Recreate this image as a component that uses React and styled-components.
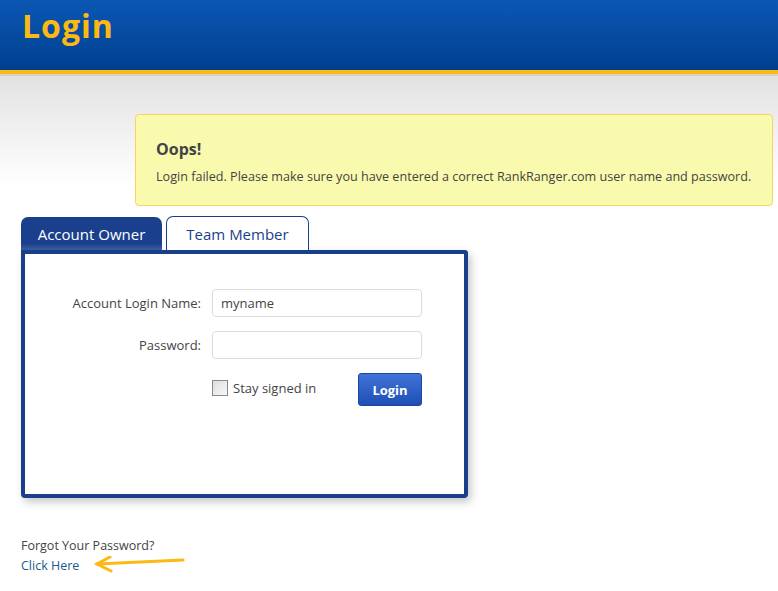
import React from 'react';
import styled, { createGlobalStyle } from 'styled-components';

const GlobalStyle = createGlobalStyle`
  body {
    margin: 0;
    background: #fff;
    font-family: "Open Sans", "Noto Sans", sans-serif;
    color: #3a3a3a;
  }
`;

const Header = styled.div`
  height: 70px;
  background: linear-gradient(#0b57b4, #003f8f);
  border-bottom: 4px solid #fdb913;
  padding-left: 22px;
  box-sizing: content-box;
`;

const Title = styled.h1`
  margin: 0;
  padding-top: 4px;
  font-family: "Open Sans", sans-serif;
  font-weight: 700;
  font-size: 32px;
  letter-spacing: 1px;
  color: #fdb913;
`;

const Main = styled.div`
  border-top: 2px solid #d2d2d2;
  background: linear-gradient(#e2e2e2, #ffffff 110px) no-repeat;
  background-size: 100% 110px;
  padding: 38px 5px 40px 21px;
`;

const Alert = styled.div`
  margin-left: 114px;
  height: 92px;
  box-sizing: border-box;
  padding: 23px 20px 0;
  background: #fafaae;
  border: 1px solid #fcd25a;
  border-radius: 4px;
`;

const AlertTitle = styled.div`
  font-weight: 700;
  font-size: 16px;
  color: #444;
`;

const AlertText = styled.div`
  margin-top: 8px;
  font-size: 12.6px;
  color: #444;
`;

const Tabs = styled.div`
  display: flex;
  gap: 4px;
  margin-top: 10px;
`;

const Tab = styled.div`
  width: ${p => (p.$active ? '141px' : '143px')};
  height: ${p => (p.$active ? '33px' : '34px')};
  margin-top: ${p => (p.$active ? '1px' : '0')};
  box-sizing: border-box;
  display: flex;
  align-items: center;
  justify-content: center;
  font-size: 15px;
  border-radius: 7px 7px 0 0;
  background: ${p => (p.$active ? 'linear-gradient(#1a3f8c 80%, #3d5f9f)' : '#fff')};
  color: ${p => (p.$active ? '#fff' : '#1a3f8c')};
  border: ${p => (p.$active ? 'none' : '1px solid #1a3f8c')};
  border-bottom: none;
`;

const Panel = styled.div`
  width: 447px;
  height: 248px;
  box-sizing: border-box;
  border: 4px solid #173f8a;
  border-radius: 0 3px 4px 4px;
  background: #fff;
  box-shadow: 3px 4px 8px rgba(0, 0, 0, 0.22);
  padding: 35px 0 0 0;
`;

const Row = styled.div`
  display: grid;
  grid-template-columns: 176px 210px;
  column-gap: 11px;
  align-items: center;
  margin-bottom: 14px;
`;

const Label = styled.label`
  text-align: right;
  font-size: 13px;
  color: #444;
`;

const Input = styled.input`
  height: 28px;
  box-sizing: border-box;
  border: 1px solid #dcdcdc;
  border-radius: 4px;
  padding: 0 8px;
  font-family: "Open Sans", sans-serif;
  font-size: 13px;
  color: #444;
  outline: none;
`;

const Actions = styled.div`
  display: flex;
  align-items: center;
  justify-content: space-between;
  margin-left: 187px;
  width: 210px;
  margin-top: 1px;
`;

const Check = styled.label`
  display: flex;
  align-items: center;
  gap: 5px;
  font-size: 13px;
  color: #444;
  margin-top: -3px;
`;

const Box = styled.span`
  width: 14px;
  height: 14px;
  border: 1px solid #8a8a8a;
  background: linear-gradient(135deg, #dedede, #f8f8f8);
`;

const Button = styled.button`
  width: 64px;
  height: 33px;
  border: 1px solid #1b45a0;
  border-radius: 3px;
  background: linear-gradient(#3f73d8, #1f4fb5);
  color: #fff;
  font-family: "Open Sans", sans-serif;
  font-weight: 700;
  font-size: 13px;
`;

const Forgot = styled.div`
  margin-top: 38px;
  font-size: 12.5px;
  line-height: 20px;
  color: #444;
`;

const LinkRow = styled.div`
  display: flex;
  align-items: center;
  gap: 14px;
`;

const Link = styled.a`
  color: #1a5a8c;
  text-decoration: none;
`;

export default function App() {
  return (
    <>
      <GlobalStyle />
      <Header>
        <Title>Login</Title>
      </Header>
      <Main>
        <Alert>
          <AlertTitle>Oops!</AlertTitle>
          <AlertText>
            Login failed. Please make sure you have entered a correct RankRanger.com user name and password.
          </AlertText>
        </Alert>
        <Tabs>
          <Tab $active>Account Owner</Tab>
          <Tab>Team Member</Tab>
        </Tabs>
        <Panel>
          <Row>
            <Label>Account Login Name:</Label>
            <Input defaultValue="myname" />
          </Row>
          <Row>
            <Label>Password:</Label>
            <Input type="password" />
          </Row>
          <Actions>
            <Check>
              <Box />
              Stay signed in
            </Check>
            <Button>Login</Button>
          </Actions>
        </Panel>
        <Forgot>
          Forgot Your Password?
          <LinkRow>
            <Link href="#">Click Here</Link>
            <svg width="94" height="20" viewBox="0 0 94 20">
              <g stroke="#fdb913" strokeWidth="3" strokeLinecap="round" fill="none">
                <path d="M90 4 L4 8" />
                <path d="M17 1 L4 8 L18 15" />
              </g>
            </svg>
          </LinkRow>
        </Forgot>
      </Main>
    </>
  );
}
